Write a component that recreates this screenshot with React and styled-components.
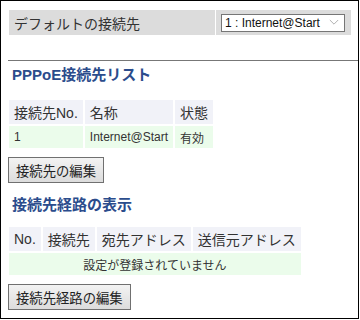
import styled, { createGlobalStyle } from "styled-components";

const GlobalStyle = createGlobalStyle`
  body {
    margin: 0;
    background: #fff;
    font-family: "Liberation Sans", "Noto Sans CJK JP", sans-serif;
    color: #333;
  }
`;

const routeHeaders = ["No.", "接続先", "宛先アドレス", "送信元アドレス"];

const App = () => {
  return (
    <Frame>
      <GlobalStyle />
      <DefaultRow>
        <LabelCell>デフォルトの接続先</LabelCell>
        <ValueCell>
          <FakeSelect>
            <span>1 : Internet@Start</span>
            <Chevron viewBox="0 0 12 8">
              <polyline points="1,1 6,6 11,1" />
            </Chevron>
          </FakeSelect>
        </ValueCell>
      </DefaultRow>

      <Rule />

      <Heading $top={4}>PPPoE接続先リスト</Heading>
      <Table $top={13}>
        <thead>
          <tr>
            <Th>接続先No.</Th>
            <Th>名称</Th>
            <Th>状態</Th>
          </tr>
        </thead>
        <tbody>
          <tr>
            <Td>1</Td>
            <Td>Internet@Start</Td>
            <Td>有効</Td>
          </tr>
        </tbody>
      </Table>
      <Button>接続先の編集</Button>

      <Heading $top={12}>接続先経路の表示</Heading>
      <Table $top={10}>
        <thead>
          <tr>
            {routeHeaders.map((h) => (
              <Th key={h}>{h}</Th>
            ))}
          </tr>
        </thead>
        <tbody>
          <tr>
            <Td colSpan={4} $center>
              設定が登録されていません
            </Td>
          </tr>
        </tbody>
      </Table>
      <Button>接続先経路の編集</Button>
    </Frame>
  );
};

const Frame = styled.div`
  box-sizing: border-box;
  width: 359px;
  height: 319px;
  border: 1px solid #000;
  padding: 9px 0 0 6px;
  overflow: hidden;
`;

const DefaultRow = styled.div`
  display: grid;
  grid-template-columns: 206px 135px;
  column-gap: 1px;
  height: 25px;
  margin-left: 2px;
`;

const LabelCell = styled.div`
  display: flex;
  align-items: center;
  padding-left: 5px;
  background: #dcdcdc;
  font-size: 14px;
  color: #333;
`;

const ValueCell = styled.div`
  display: flex;
  align-items: center;
  padding-left: 5px;
  background: #dcdcdc;
`;

const FakeSelect = styled.div`
  box-sizing: border-box;
  display: flex;
  align-items: center;
  justify-content: space-between;
  width: 124px;
  height: 18px;
  padding: 0 5px 0 3px;
  border: 1px solid #767676;
  background: #fff;
  font-size: 12px;
  color: #111;
`;

const Chevron = styled.svg`
  width: 10px;
  height: 7px;
  fill: none;
  stroke: #a0a0a0;
  stroke-width: 1;
`;

const Rule = styled.div`
  height: 1px;
  margin: 25px 0 0 1px;
  background: #777;
`;

const Heading = styled.h2`
  margin: ${(p) => p.$top}px 0 0 5px;
  font-size: 15px;
  line-height: 20px;
  font-weight: bold;
  color: #2b4c8c;
`;

const Table = styled.table`
  margin-top: ${(p) => p.$top}px;
  border-collapse: separate;
  border-spacing: 2px;
`;

const Th = styled.th`
  height: 24px;
  padding: 0 5px;
  background: #f1f2f8;
  font-size: 14px;
  font-weight: normal;
  text-align: left;
  white-space: nowrap;
  color: #333;
`;

const Td = styled.td`
  height: 22px;
  padding: 0 5px;
  background: #ebfceb;
  font-size: 12px;
  text-align: ${(p) => (p.$center ? "center" : "left")};
  white-space: nowrap;
  color: #333;
`;

const Button = styled.button`
  display: block;
  box-sizing: border-box;
  height: 26px;
  margin: 7px 0 0 1px;
  padding: 0 7px;
  border: 1px solid #707070;
  border-radius: 0;
  background: linear-gradient(#f3f3f3, #dcdcdc);
  font-family: "Liberation Sans", "Noto Sans CJK JP", sans-serif;
  font-size: 13.33px;
  color: #222;
`;

export default App;
